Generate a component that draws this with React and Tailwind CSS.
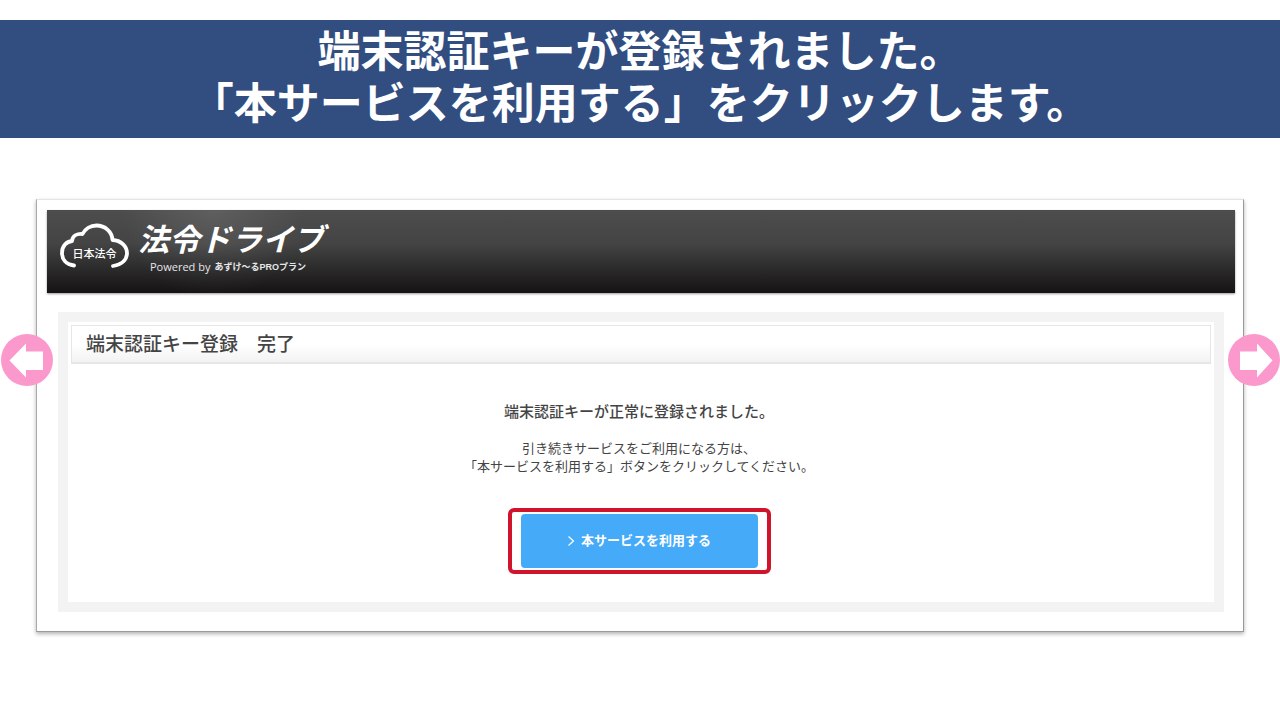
const CloudLogo = () => {
  return (
    <svg viewBox="0 0 72 50" className="h-[50px] w-[72px] shrink-0" role="img" aria-label="日本法令">
      <path
        d="M16 45.5C8 44.5 4 39.5 4 33C4 26 8.500 21.500 14 21C14.500 16 19 13.500 24.500 14C27 9 32.500 5.500 38.500 5.500C47 5.500 54 11.500 54.500 20C63 20.500 69 26 69 33C69 39.500 64 44.500 55 46"
        fill="none"
        stroke="#fff"
        strokeWidth="3.800"
        strokeLinejoin="round"
        strokeLinecap="round"
      />
      <text
        x="36.5"
        y="38"
        textAnchor="middle"
        fill="#fff"
        fontSize="11"
        fontWeight="500"
        fontFamily="'Noto Sans CJK JP', sans-serif"
      >
        日本法令
      </text>
    </svg>
  )
}

const Brand = () => {
  return (
    <a href="#top" className="flex items-start text-white">
      <CloudLogo />
      <span className="ml-2 flex flex-col pt-px">
        <span className="text-[31px] leading-10 font-bold italic">法令ドライブ</span>
        <span className="ml-3 flex items-center gap-1 whitespace-nowrap leading-3 text-gray-200">
          <span className="font-['Open_Sans',sans-serif] text-[11px]">Powered by</span>
          <span className="text-[9px] font-bold">あずけ〜るPROプラン</span>
        </span>
      </span>
    </a>
  )
}

const arrowPaths = {
  left: 'M8.500 26.500L25 9.500V17.500H42V36H25V43.500Z',
  right: 'M44.500 26.500L29 9.500V17.500H12V36H29V43.500Z'
}

const ArrowButton = ({ direction, label, className }) => {
  return (
    <button type="button" aria-label={label} className={`absolute top-1/2 size-[52px] -translate-y-1/2 ${className}`}>
      <svg viewBox="0 0 52 52" className="size-full">
        <circle cx="26" cy="26" r="26" fill="#fb99cd" />
        <path d={arrowPaths[direction]} fill="#fff" />
      </svg>
    </button>
  )
}

const CompletePanel = () => {
  return (
    <section className="mx-[11px] mt-[19px] border-10 border-[#f3f3f3] px-[3px] pt-[3px] pb-7">
      <h2 className="border border-b-2 border-[#e6e6e6] bg-linear-to-b from-white from-50% to-[#f3f3f3] px-[14px] pt-1 pb-[2px] text-[19px] leading-[30px] font-medium text-[#444]">
        端末認証キー登録　完了
      </h2>
      <div className="flex flex-col items-center pt-9 pr-1 text-center text-[#444]">
        <p className="text-[15px] leading-6 font-medium">端末認証キーが正常に登録されました。</p>
        <p className="mt-4 text-[13px] leading-[18px]">
          引き続きサービスをご利用になる方は、
          <br />
          「本サービスを利用する」ボタンをクリックしてください。
        </p>
        <div className="mt-8 rounded-md border-4 border-[#d0142c] px-[9px] py-[2px]">
          <button
            type="button"
            className="flex h-[54px] w-[237px] items-center justify-center gap-[6px] rounded-sm bg-[#45aaf7] text-[13px] font-bold text-white"
          >
            <svg viewBox="0 0 8 12" className="h-3 w-2" aria-hidden="true">
              <path d="M1.500 1.500L6.500 6L1.500 10.500" fill="none" stroke="#fff" strokeWidth="1.200" />
            </svg>
            本サービスを利用する
          </button>
        </div>
      </div>
    </section>
  )
}

const App = () => {
  return (
    <main
      id="top"
      lang="ja"
      className="relative min-h-screen bg-white pt-5 font-['Liberation_Sans','Noto_Sans_CJK_JP',sans-serif]"
    >
      <h1 className="bg-[#324d7f] pt-[6px] pb-2 text-center text-[43px] leading-[52px] font-bold text-white">
        端末認証キーが登録されました。
        <br />
        「本サービスを利用する」をクリックします。
      </h1>

      <div className="mx-9 mt-[61px] border border-t-[#e4e4e4] border-r-[#999] border-b-[#999] border-l-[#aaa] bg-white pt-[10px] pr-2 pb-[19px] pl-[10px] shadow-[0_2px_4px_rgba(0,0,0,0.3)]">
        <header className="h-[83px] bg-[radial-gradient(circle_at_14%_0%,rgba(255,255,255,0.10),transparent_90px),linear-gradient(#4d4d4d,#444_40%,#151313)] px-[11px] pt-[10px] shadow-[0_1px_2px_rgba(0,0,0,0.4)]">
          <Brand />
        </header>
        <CompletePanel />
      </div>

      <ArrowButton direction="left" label="前へ" className="left-px" />
      <ArrowButton direction="right" label="次へ" className="right-0" />
    </main>
  )
}

export default App
